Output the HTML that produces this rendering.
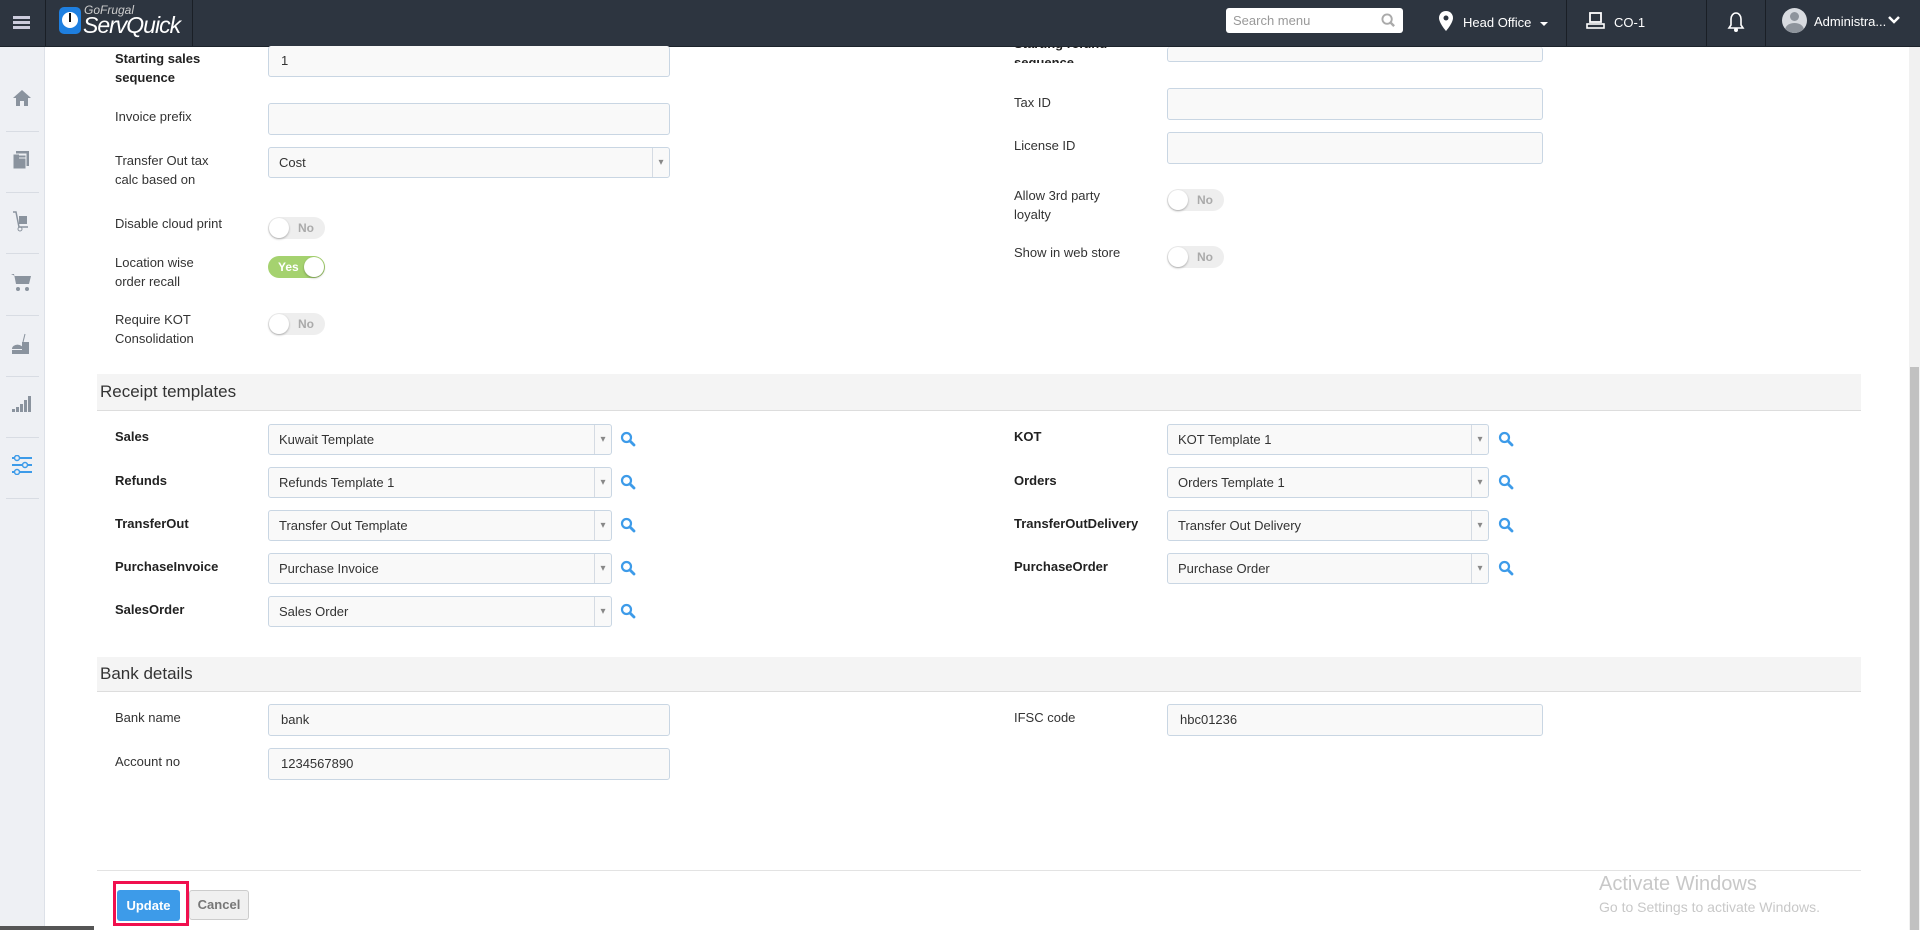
<!DOCTYPE html>
<html><head><meta charset="utf-8"><style>
*{box-sizing:border-box;margin:0;padding:0}
body{width:1920px;height:930px;overflow:hidden;background:#fff;font-family:"Liberation Sans",Arial,sans-serif;font-size:13px;color:#333;position:relative}
.a{position:absolute}
.hdr{left:0;top:0;width:1920px;height:47px;background:#2d3540;border-bottom:1px solid #1c232b}
.vs{width:1px;height:46px;background:#1a1f26;top:0}
.side{left:0;top:47px;width:45px;height:883px;background:#eef0f4;border-right:1px solid #dde1e8}
.sep{left:6px;width:33px;height:1px;background:#d8dce3}
.lbl{font-size:13px;color:#333;line-height:19px}
.b{font-weight:bold;color:#222}
.inp{height:32px;border:1px solid #c9d6e3;border-radius:3px;background:#f9f9f9;padding-left:12px;line-height:30px;font-size:13px;color:#333}
.sel{height:31px;border:1px solid #c9d6e3;border-radius:3px;background:#f9f9f9;padding-left:10px;line-height:29px;font-size:13px;color:#333}
.sel:after{content:"▾";position:absolute;right:0;top:0;width:16px;height:29px;border-left:1px solid #d5dbe3;color:#888;font-size:10px;text-align:center}
.tg{width:57px;height:22px;border-radius:11px;background:#eee;font-size:12px;font-weight:bold;color:#aaa}
.tg i{position:absolute;left:1px;top:1px;width:20px;height:20px;border-radius:50%;background:#fff;box-shadow:0 1px 2px rgba(0,0,0,.3)}
.tg span{position:absolute;left:30px;top:4px}
.tg.on{background:#a5d26f;color:#fff}
.tg.on i{left:36px}
.tg.on span{left:10px}
.band{left:97px;width:1764px;background:#f4f4f4;border-bottom:1px solid #ddd;font-size:17px;color:#333;padding-left:3px}
.mg{width:16px;height:16px}
</style></head><body>
<div class="a hdr"></div>
<div class="a" style="left:13px;top:16px;width:17px;height:3px;background:#ccd;box-shadow:0 5px 0 #ccd,0 10px 0 #ccd"></div>
<div class="a vs" style="left:45px"></div>
<div class="a vs" style="left:192px"></div>
<div class="a" style="left:59px;top:7px;width:22px;height:27px;background:#1e7fe0;border-radius:5px"></div>
<div class="a" style="left:62px;top:12px;width:16px;height:16px;background:#fff;border-radius:50%"></div>
<div class="a" style="left:69px;top:13px;width:2px;height:9px;background:#111"></div>
<div class="a" style="left:84px;top:3px;color:#ccc;font-size:12px;font-style:italic">GoFrugal</div>
<div class="a" style="left:83px;top:12px;color:#fff;font-size:23px;font-style:italic;letter-spacing:-1px">ServQuick</div>
<div class="a" style="left:1226px;top:8px;width:177px;height:25px;background:#fff;border-radius:3px;color:#999;font-size:13px;padding:5px 7px">Search menu</div>
<svg class="a" style="left:1381px;top:13px" width="15" height="15" viewBox="0 0 16 16"><circle cx="6.5" cy="6.5" r="5" fill="none" stroke="#aaa" stroke-width="2"/><path d="M10 10l4 4" stroke="#aaa" stroke-width="2.5"/></svg>
<svg class="a" style="left:1439px;top:11px" width="14" height="20" viewBox="0 0 14 20"><path d="M7 0C3 0 0 3 0 7c0 5 7 13 7 13s7-8 7-13C14 3 11 0 7 0z" fill="#fff"/><circle cx="7" cy="7" r="2.5" fill="#2d3540"/></svg>
<div class="a" style="left:1463px;top:15px;color:#fff;font-size:13px">Head Office</div>
<div class="a" style="left:1540px;top:22px;border:4px solid transparent;border-top-color:#fff"></div>
<div class="a vs" style="left:1566px"></div>
<svg class="a" style="left:1586px;top:12px" width="20" height="18" viewBox="0 0 20 18"><rect x="4" y="1" width="11" height="9" fill="none" stroke="#fff" stroke-width="1.8"/><rect x="1" y="12" width="17" height="4" fill="none" stroke="#fff" stroke-width="1.6"/></svg>
<div class="a" style="left:1614px;top:15px;color:#fff;font-size:13px">CO-1</div>
<div class="a vs" style="left:1706px"></div>
<svg class="a" style="left:1727px;top:11px" width="18" height="22" viewBox="0 0 18 22"><path d="M9 2c-3 0-5 3-5 6v6l-2 3h14l-2-3V8c0-3-2-6-5-6z" fill="none" stroke="#fff" stroke-width="1.6"/><circle cx="9" cy="19" r="2" fill="#fff"/></svg>
<div class="a vs" style="left:1765px"></div>
<div class="a" style="left:1782px;top:8px;width:25px;height:25px;border-radius:50%;background:#d8dbe0;overflow:hidden"><div class="a" style="left:8px;top:4px;width:9px;height:9px;border-radius:50%;background:#8e949c"></div><div class="a" style="left:3px;top:15px;width:19px;height:14px;border-radius:50%;background:#8e949c"></div></div>
<div class="a" style="left:1814px;top:14px;color:#fff;font-size:13px">Administra...</div>
<svg class="a" style="left:1888px;top:16px" width="12" height="9" viewBox="0 0 12 9"><path d="M1 1l5 5 5-5" fill="none" stroke="#fff" stroke-width="2.5"/></svg>

<div class="a side"></div>
<div class="a sep" style="top:131px"></div><div class="a sep" style="top:192px"></div><div class="a sep" style="top:253px"></div><div class="a sep" style="top:315px"></div><div class="a sep" style="top:376px"></div><div class="a sep" style="top:437px"></div><div class="a sep" style="top:498px"></div>
<svg class="a" style="left:12px;top:89px" width="20" height="18" viewBox="0 0 20 18"><path d="M10 1L1 9h3v8h4v-5h4v5h4V9h3z" fill="#8a939e"/></svg>
<svg class="a" style="left:12px;top:150px" width="18" height="20" viewBox="0 0 18 20"><rect x="4" y="1" width="13" height="15" fill="#8a939e"/><rect x="1" y="4" width="13" height="15" fill="#8a939e" stroke="#eef0f4"/><path d="M7 5h7M7 8h7" stroke="#eef0f4"/></svg>
<svg class="a" style="left:12px;top:210px" width="18" height="22" viewBox="0 0 18 22"><path d="M1 2h3l3 15h9" fill="none" stroke="#8a939e" stroke-width="1.5"/><rect x="7" y="6" width="8" height="8" fill="#8a939e"/><circle cx="8" cy="19" r="2" fill="none" stroke="#8a939e"/></svg>
<svg class="a" style="left:10px;top:272px" width="22" height="20" viewBox="0 0 22 20"><path d="M1 2h3l2 10h13l2-8H5" fill="#8a939e"/><circle cx="8" cy="17" r="2" fill="#8a939e"/><circle cx="17" cy="17" r="2" fill="#8a939e"/></svg>
<svg class="a" style="left:11px;top:333px" width="20" height="22" viewBox="0 0 20 22"><path d="M14 1l-2 8" stroke="#8a939e"/><rect x="11" y="9" width="7" height="12" fill="#8a939e"/><path d="M1 16a5 4 0 0 1 11 0z" fill="#8a939e"/><rect x="1" y="17" width="11" height="4" fill="#8a939e"/></svg>
<svg class="a" style="left:12px;top:396px" width="20" height="16" viewBox="0 0 20 16"><rect x="0" y="13" width="3" height="3" fill="#8a939e"/><rect x="4" y="11" width="3" height="5" fill="#8a939e"/><rect x="8" y="8" width="3" height="8" fill="#8a939e"/><rect x="12" y="4" width="3" height="12" fill="#8a939e"/><rect x="16" y="0" width="3" height="16" fill="#8a939e"/></svg>
<svg class="a" style="left:11px;top:455px" width="22" height="20" viewBox="0 0 22 20"><path d="M1 3h20M1 10h20M1 17h20" stroke="#3d9be9" stroke-width="2"/><circle cx="6" cy="3" r="2.5" fill="#eef0f4" stroke="#3d9be9" stroke-width="1.5"/><circle cx="14" cy="10" r="2.5" fill="#eef0f4" stroke="#3d9be9" stroke-width="1.5"/><circle cx="6" cy="17" r="2.5" fill="#eef0f4" stroke="#3d9be9" stroke-width="1.5"/></svg>

<!-- top form left -->
<div class="a lbl b" style="left:115px;top:49px">Starting sales<br>sequence</div>
<div class="a inp" style="left:268px;top:46px;width:402px;border-top:none;height:31px">1</div>
<div class="a lbl" style="left:115px;top:107px">Invoice prefix</div>
<div class="a inp" style="left:268px;top:103px;width:402px"></div>
<div class="a lbl" style="left:115px;top:151px">Transfer Out tax<br>calc based on</div>
<div class="a sel" style="left:268px;top:147px;width:402px;height:31px">Cost</div>
<div class="a lbl" style="left:115px;top:214px">Disable cloud print</div>
<div class="a tg" style="left:268px;top:217px"><i></i><span>No</span></div>
<div class="a lbl" style="left:115px;top:253px">Location wise<br>order recall</div>
<div class="a tg on" style="left:268px;top:256px"><i></i><span>Yes</span></div>
<div class="a lbl" style="left:115px;top:310px">Require KOT<br>Consolidation</div>
<div class="a tg" style="left:268px;top:313px"><i></i><span>No</span></div>
<!-- right -->
<div class="a lbl b" style="left:1014px;top:34px;height:29px;overflow:hidden;clip-path:inset(13px 0 0 0)">Starting refund<br>sequence</div>
<div class="a inp" style="left:1167px;top:47px;width:376px;height:15px;border-top:none"></div>
<div class="a" style="left:0;top:0;width:1px"></div>
<div class="a lbl" style="left:1014px;top:93px">Tax ID</div>
<div class="a inp" style="left:1167px;top:88px;width:376px"></div>
<div class="a lbl" style="left:1014px;top:136px">License ID</div>
<div class="a inp" style="left:1167px;top:132px;width:376px"></div>
<div class="a lbl" style="left:1014px;top:186px">Allow 3rd party<br>loyalty</div>
<div class="a tg" style="left:1167px;top:189px"><i></i><span>No</span></div>
<div class="a lbl" style="left:1014px;top:243px">Show in web store</div>
<div class="a tg" style="left:1167px;top:246px"><i></i><span>No</span></div>

<!-- receipt templates -->
<div class="a band" style="top:374px;height:37px;line-height:36px">Receipt templates</div>
<div class="a lbl b" style="left:115px;top:427px">Sales</div>
<div class="a sel" style="left:268px;top:424px;width:344px">Kuwait Template</div>
<div class="a lbl b" style="left:115px;top:471px">Refunds</div>
<div class="a sel" style="left:268px;top:467px;width:344px">Refunds Template 1</div>
<div class="a lbl b" style="left:115px;top:514px">TransferOut</div>
<div class="a sel" style="left:268px;top:510px;width:344px">Transfer Out Template</div>
<div class="a lbl b" style="left:115px;top:557px">PurchaseInvoice</div>
<div class="a sel" style="left:268px;top:553px;width:344px">Purchase Invoice</div>
<div class="a lbl b" style="left:115px;top:600px">SalesOrder</div>
<div class="a sel" style="left:268px;top:596px;width:344px">Sales Order</div>
<div class="a lbl b" style="left:1014px;top:427px">KOT</div>
<div class="a sel" style="left:1167px;top:424px;width:322px">KOT Template 1</div>
<div class="a lbl b" style="left:1014px;top:471px">Orders</div>
<div class="a sel" style="left:1167px;top:467px;width:322px">Orders Template 1</div>
<div class="a lbl b" style="left:1014px;top:514px">TransferOutDelivery</div>
<div class="a sel" style="left:1167px;top:510px;width:322px">Transfer Out Delivery</div>
<div class="a lbl b" style="left:1014px;top:557px">PurchaseOrder</div>
<div class="a sel" style="left:1167px;top:553px;width:322px">Purchase Order</div>
<svg width="0" height="0" style="position:absolute"><defs><symbol id="m" viewBox="0 0 16 16"><circle cx="6.5" cy="6.5" r="4.5" fill="none" stroke="#3d9be9" stroke-width="2.2"/><path d="M10 10l4 4" stroke="#3d9be9" stroke-width="2.8" stroke-linecap="round"/></symbol></defs></svg>
<svg class="a mg" style="left:620px;top:431px"><use href="#m"/></svg>
<svg class="a mg" style="left:620px;top:474px"><use href="#m"/></svg>
<svg class="a mg" style="left:620px;top:517px"><use href="#m"/></svg>
<svg class="a mg" style="left:620px;top:560px"><use href="#m"/></svg>
<svg class="a mg" style="left:620px;top:603px"><use href="#m"/></svg>
<svg class="a mg" style="left:1498px;top:431px"><use href="#m"/></svg>
<svg class="a mg" style="left:1498px;top:474px"><use href="#m"/></svg>
<svg class="a mg" style="left:1498px;top:517px"><use href="#m"/></svg>
<svg class="a mg" style="left:1498px;top:560px"><use href="#m"/></svg>

<!-- bank -->
<div class="a band" style="top:657px;height:35px;line-height:34px">Bank details</div>
<div class="a lbl" style="left:115px;top:708px">Bank name</div>
<div class="a inp" style="left:268px;top:704px;width:402px">bank</div>
<div class="a lbl" style="left:115px;top:752px">Account no</div>
<div class="a inp" style="left:268px;top:748px;width:402px">1234567890</div>
<div class="a lbl" style="left:1014px;top:708px">IFSC code</div>
<div class="a inp" style="left:1167px;top:704px;width:376px">hbc01236</div>

<div class="a" style="left:97px;top:870px;width:1764px;height:1px;background:#e3e3e3"></div>
<div class="a" style="left:189px;top:890px;width:60px;height:30px;background:#f0f0f0;border:1px solid #ccc;border-radius:3px;color:#777;font-weight:bold;font-size:13px;text-align:center;line-height:28px">Cancel</div>
<div class="a" style="left:117px;top:890px;width:63px;height:31px;background:#3d9be9;border-radius:3px;color:#fff;font-weight:bold;font-size:13px;text-align:center;line-height:31px">Update</div>
<div class="a" style="left:113px;top:881px;width:76px;height:45px;border:3px solid #f0104e"></div>
<div class="a" style="left:1599px;top:873px;color:#c8c8c8;font-size:20px">Activate Windows</div>
<div class="a" style="left:1599px;top:899px;color:#c8c8c8;font-size:14px">Go to Settings to activate Windows.</div>
<div class="a" style="left:0;top:926px;width:94px;height:4px;background:#555"></div>
<div class="a" style="left:1909px;top:47px;width:11px;height:883px;background:#f1f1f1"></div>
<div class="a" style="left:1910px;top:367px;width:9px;height:563px;background:#c1c1c1"></div>
</body></html>
